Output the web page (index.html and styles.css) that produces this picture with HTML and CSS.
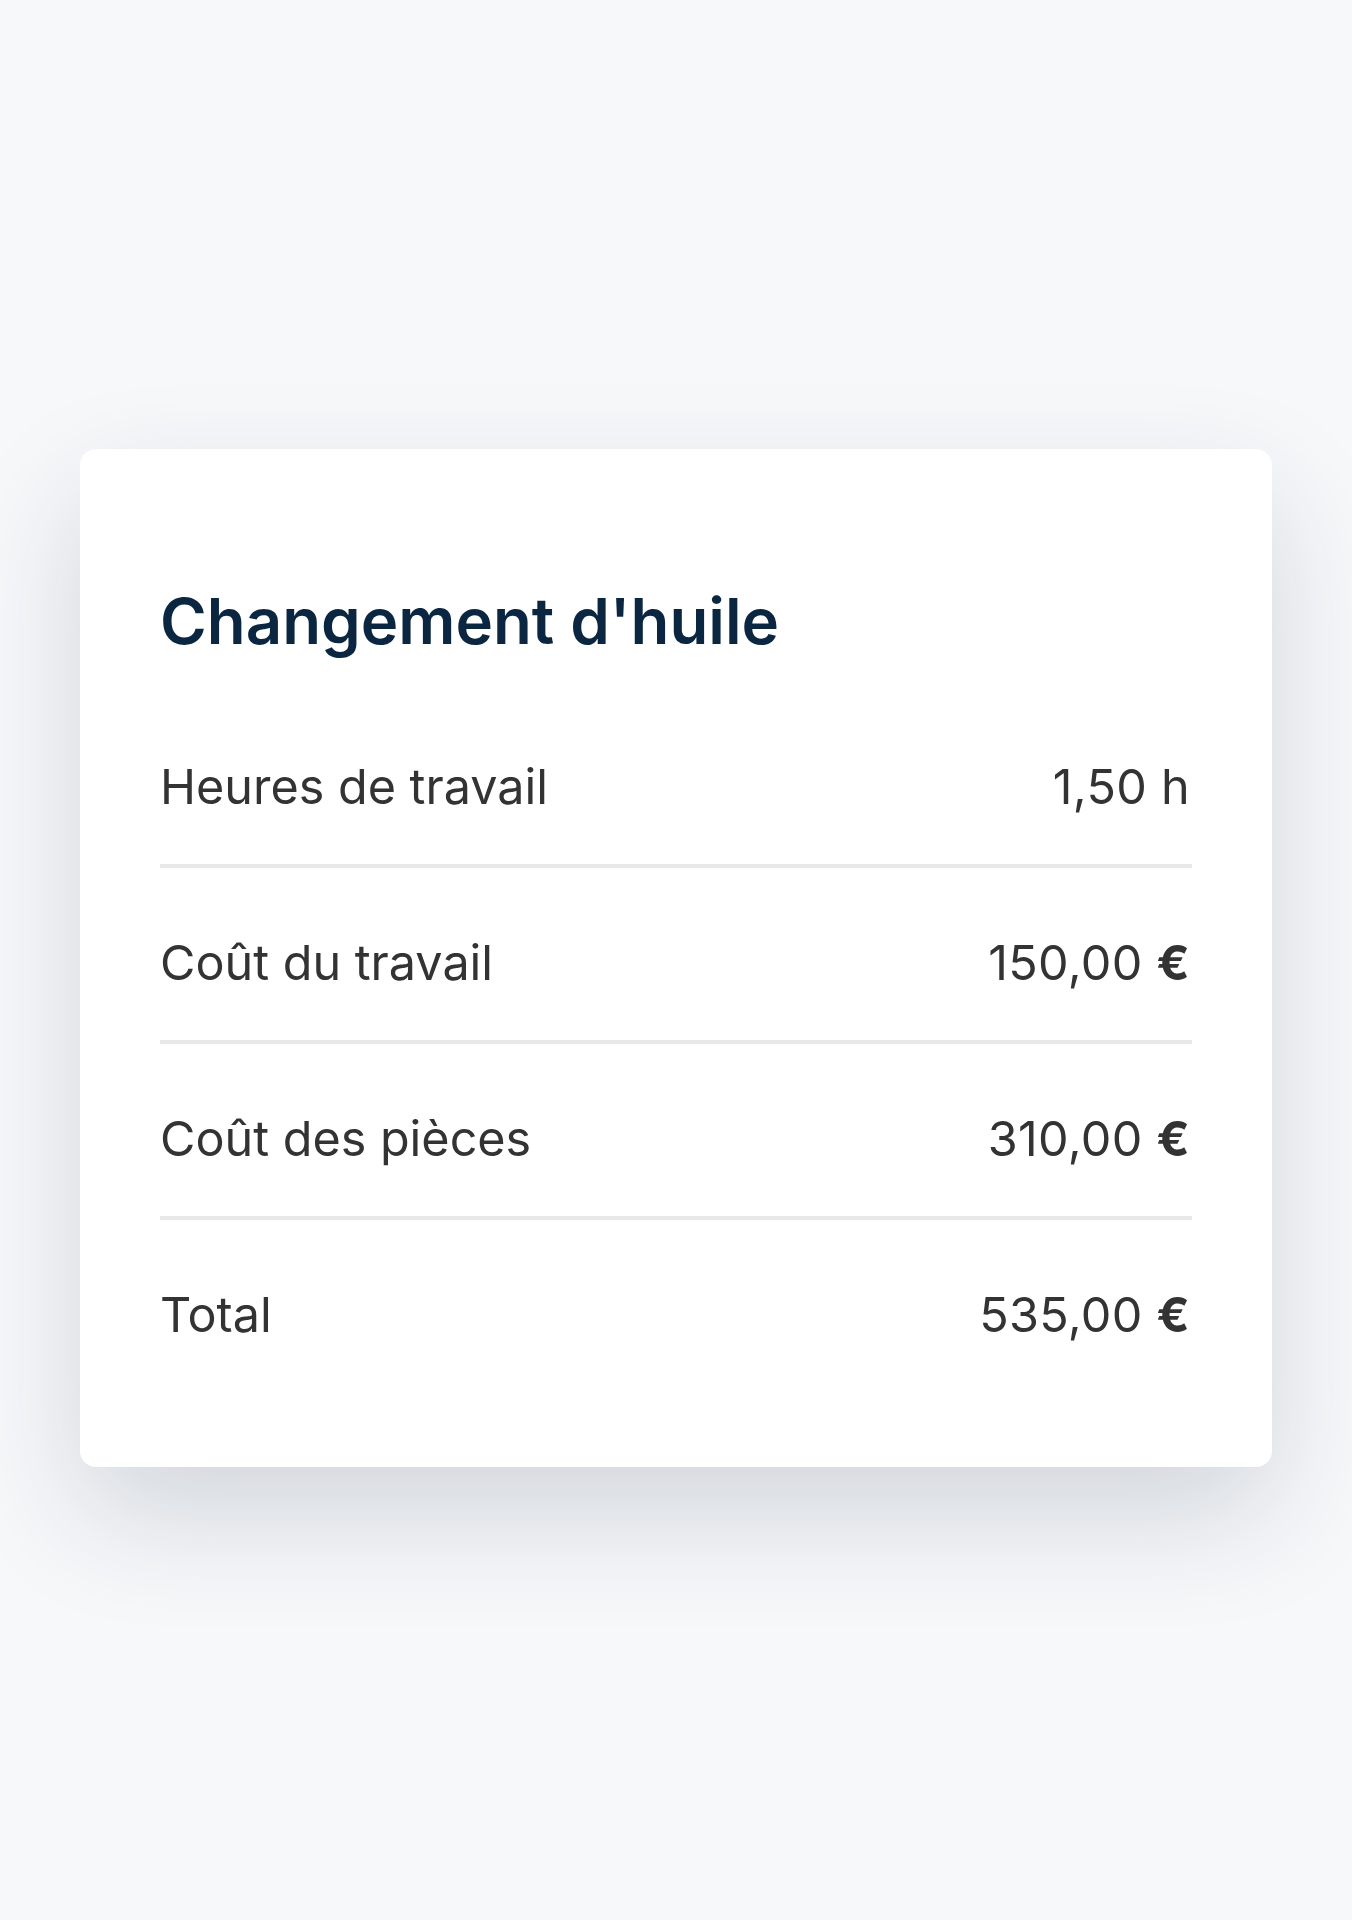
FILE: index.html
```html
<!DOCTYPE html>
<html lang="fr">
<head>
    <meta charset="UTF-8">
    <meta name="viewport" content="width=device-width, initial-scale=1.0">
    <title>Changement d'huile</title>
    <link rel="stylesheet" href="styles.css">
</head>
<body>
    <div class="card">
        <h2 class="card-title">Changement d'huile</h2>
        <div class="row">
            <span class="label">Heures de travail</span>
            <span class="value">1,50 h</span>
        </div>
        <div class="row">
            <span class="label">Coût du travail</span>
            <span class="value">150,00 <span class="cur">€</span></span>
        </div>
        <div class="row">
            <span class="label">Coût des pièces</span>
            <span class="value">310,00 <span class="cur">€</span></span>
        </div>
        <div class="row">
            <span class="label">Total</span>
            <span class="value">535,00 <span class="cur">€</span></span>
        </div>
    </div>
</body>
</html>
```

FILE: styles.css
```css
body {
    font-family: Inter, "Noto Sans", sans-serif;
    background-color: #f7f8fa;
    margin: 0;
    padding: 0 80px 5px;
    min-height: 100vh;
    display: flex;
    align-items: center;
    box-sizing: border-box;
}
.card {
    flex: 1;
    background: #ffffff;
    border-radius: 16px;
    box-shadow: 0 48px 120px rgba(20, 40, 64, 0.16);
    padding: 134px 80px 75px;
}
.card-title {
    margin: 0 0 33px;
    font-size: 63.5px;
    line-height: 76px;
    font-weight: 600;
    color: #0b2640;
}
.row {
    display: flex;
    justify-content: space-between;
    align-items: center;
    padding: 59px 0 41px;
    font-size: 48.5px;
    line-height: 72px;
    color: #333333;
    border-bottom: 4px solid #e8e8ea;
}
.row:last-child {
    border-bottom: none;
}
.value {
    letter-spacing: 0.3px;
    margin-right: 2px;
}
.cur {
    font-weight: 700;
}
```
